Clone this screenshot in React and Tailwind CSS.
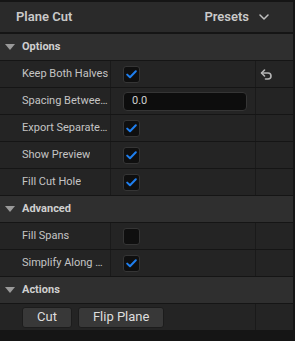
import React from "react";

const Check = ({ checked }) => (
  <div className="w-[17px] h-[17px] rounded-[3px] bg-[#0f0f0f] border border-[#353535] flex items-center justify-center">
    {checked && (
      <svg width="11" height="9" viewBox="0 0 11 9">
        <path d="M1.2 4.6 L4 7.3 L9.8 1.3" fill="none" stroke="#1f7fef" strokeWidth="2" strokeLinecap="round" strokeLinejoin="round" />
      </svg>
    )}
  </div>
);

const Section = ({ title }) => (
  <div className="h-[26px] mb-px bg-[#2f2f2f] flex items-center">
    <svg width="10" height="6" viewBox="0 0 10 6" className="ml-[5px]">
      <path d="M0 0 H10 L5 6 Z" fill="#9a9a9a" />
    </svg>
    <span className="ml-[7px] text-[11px] font-bold text-[#cfcfcf]">{title}</span>
  </div>
);

const Row = ({ label, children, reset }) => (
  <div className="h-[26px] mb-px flex bg-[#242424]">
    <div className="w-[111px] pl-[22px] flex items-center border-r border-[#1a1a1a]">
      <span className="text-[11px] text-[#c4c4c4] whitespace-nowrap overflow-hidden text-ellipsis">{label}</span>
    </div>
    <div className="w-[145px] pl-[12px] flex items-center border-r border-[#1a1a1a]">{children}</div>
    <div className="flex-1 flex items-center pl-[4px]">
      {reset && (
        <svg width="13" height="11" viewBox="0 0 13 11">
          <path d="M4.5 1 L1.5 4 L4.5 7" fill="none" stroke="#b5b5b5" strokeWidth="1.6" strokeLinecap="round" strokeLinejoin="round" />
          <path d="M1.8 4 H8 A3 3 0 0 1 8 10 H5.5" fill="none" stroke="#b5b5b5" strokeWidth="1.6" strokeLinecap="round" />
        </svg>
      )}
    </div>
  </div>
);

const Btn = ({ children }) => (
  <div className="h-[21px] px-[14px] rounded-[3px] bg-[#383838] border border-[#1c1c1c] flex items-center text-[13px] text-[#dedede]">
    {children}
  </div>
);

export default function App() {
  return (
    <div className="w-[295px] h-[341px] bg-[#151515] pt-[2px] pr-[2px] flex flex-col" style={{ fontFamily: "Roboto, 'Noto Sans', sans-serif" }}>
      <div className="h-[30px] bg-[#2a2a2a] flex items-center justify-between pl-[16px] pr-[24px]">
        <span className="text-[13px] font-semibold text-[#c9c9c9]">Plane Cut</span>
        <div className="flex items-center gap-[10px]">
          <span className="text-[13px] font-semibold text-[#c9c9c9]">Presets</span>
          <svg width="10" height="6" viewBox="0 0 10 6">
            <path d="M1 1 L5 5 L9 1" fill="none" stroke="#c0c0c0" strokeWidth="1.5" strokeLinecap="round" strokeLinejoin="round" />
          </svg>
        </div>
      </div>
      <div className="h-[2px]" />
      <Section title="Options" />
      <Row label="Keep Both Halves" reset><Check checked /></Row>
      <Row label="Spacing Between Halves">
        <div className="w-[124px] h-[19px] rounded-[4px] bg-[#0d0d0d] border border-[#353535] flex items-center pl-[8px] text-[11px] text-[#d0d0d0]">0.0</div>
      </Row>
      <Row label="Export Separated Pieces"><Check checked /></Row>
      <Row label="Show Preview"><Check checked /></Row>
      <Row label="Fill Cut Hole"><Check checked /></Row>
      <Section title="Advanced" />
      <Row label="Fill Spans"><Check /></Row>
      <Row label="Simplify Along New Edges"><Check checked /></Row>
      <Section title="Actions" />
      <div className="h-[26px] mb-px flex bg-[#242424]">
        <div className="w-[256px] pl-[22px] flex items-center gap-[6px] border-r border-[#1a1a1a]">
          <Btn>Cut</Btn>
          <Btn>Flip Plane</Btn>
        </div>
        <div className="flex-1" />
      </div>
    </div>
  );
}
